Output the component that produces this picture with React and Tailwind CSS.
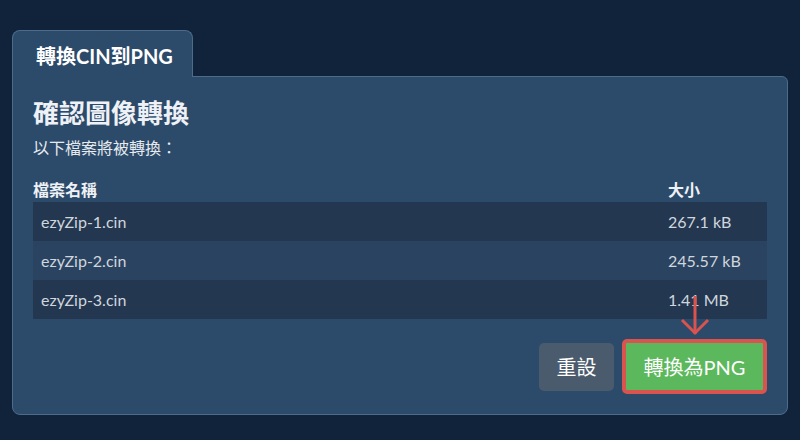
export default function App() {
  const files = [
    { name: "ezyZip-1.cin", size: "267.1 kB" },
    { name: "ezyZip-2.cin", size: "245.57 kB" },
    { name: "ezyZip-3.cin", size: "1.41 MB" },
  ];

  return (
    <div
      className="w-[800px] h-[440px] bg-[#11233a] px-[12px] pt-[30px] overflow-hidden"
      style={{ fontFamily: '"Lato", "Noto Sans CJK TC", sans-serif' }}
    >
      {/* tab */}
      <div className="relative z-10 flex items-center w-[181px] h-[47px] -mb-px bg-[#2c4a6a] border border-b-0 border-[#4d6b8b] rounded-t-[8px] pl-[23px] pt-[4px]">
        <span className="text-[20px] font-bold text-white">轉換CIN到PNG</span>
      </div>

      {/* panel */}
      <div className="bg-[#2c4a6a] border border-[#4d6b8b] rounded-b-[8px] rounded-tr-[6px] px-[20px] pt-[20px] pb-[20px]">
        <h2 className="text-[26px] leading-[32px] font-bold text-[#eef1f5]">確認圖像轉換</h2>
        <p className="mt-[9px] text-[16px] leading-[20px] text-[#e6eaef]">以下檔案將被轉換：</p>

        <div className="mt-[20px]">
          <div className="grid grid-cols-[1fr_107px] h-[24px] items-center text-[16px] font-bold text-[#eef1f5]">
            <div>檔案名稱</div>
            <div className="pl-[8px]">大小</div>
          </div>
          {files.map((f, i) => (
            <div
              key={f.name}
              className={
                "grid grid-cols-[1fr_107px] h-[39px] items-center text-[16px] text-[#d0d6de] " +
                (i % 2 === 0 ? "bg-[#243750]" : "bg-[#2a4360]")
              }
            >
              <div className="pl-[8px]">{f.name}</div>
              <div className="pl-[8px]">{f.size}</div>
            </div>
          ))}
        </div>

        <div className="mt-[20px] flex justify-end items-center gap-[8px]">
          <button className="w-[75px] h-[48px] rounded-[5px] bg-[#4b5b6e] text-[20px] text-white">
            重設
          </button>
          <div className="relative">
            <svg
              className="absolute left-1/2 -translate-x-1/2 bottom-full mb-[3px]"
              width="30"
              height="40"
              viewBox="0 0 30 40"
              fill="none"
              stroke="#d9534f"
              strokeWidth="3"
            >
              <line x1="15" y1="0" x2="15" y2="38" />
              <polyline points="2,24 15,37 28,24" />
            </svg>
            <button className="w-[145px] h-[55px] rounded-[5px] bg-[#5cb85c] border-[4px] border-[#d9534f] text-[20px] text-white">
              轉換為PNG
            </button>
          </div>
        </div>
      </div>
    </div>
  );
}
